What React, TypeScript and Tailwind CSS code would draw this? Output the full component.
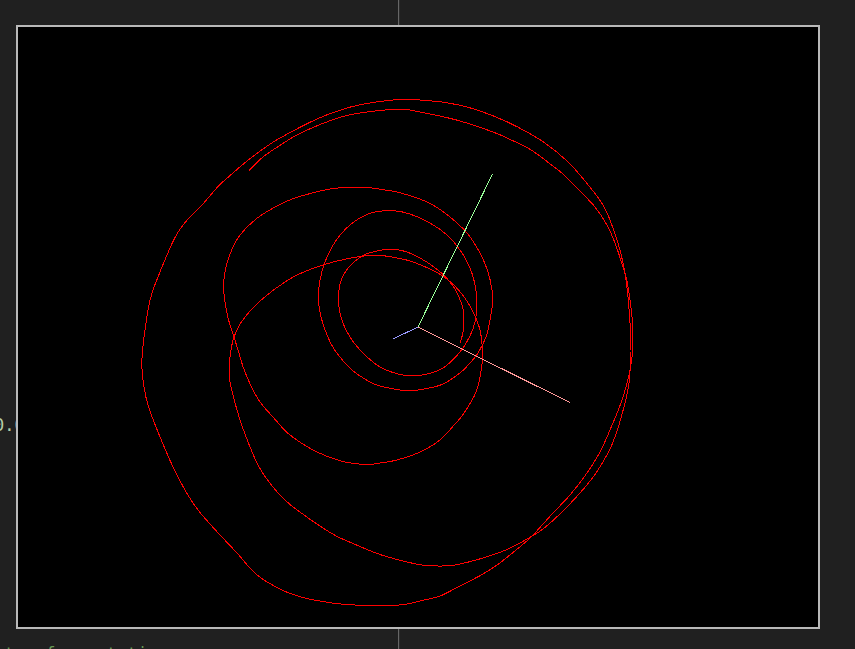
type Point = [number, number];

const TRAJECTORY: Point[] = [
  [249, 170.5], [263, 157], [279, 146], [297, 135], [320, 124.5], [343, 116.5], [360, 113], [385, 110],
  [397, 109.5], [406, 109.5], [415, 111], [435, 115], [460, 121], [493, 132], [508, 138.5], [527, 147.5],
  [537, 154], [547, 161.5], [563, 174], [577, 188], [595, 207], [607, 225], [615, 243], [623, 267],
  [627, 281], [630, 300], [632, 317], [632.7, 335], [632, 357], [630, 370], [627, 383], [621, 403],
  [610, 430], [600, 452], [587, 473], [570, 495], [553, 513], [530, 538], [508, 556.5], [497, 565],
  [483, 574], [467, 582.5], [456, 588], [440, 596], [420, 601], [407, 604], [390, 605.5], [355, 605],
  [332, 603], [303, 597.5], [282, 590], [257, 575], [237, 553], [215, 529.5], [198, 510], [185, 490],
  [173, 467], [158, 432], [148, 405], [144, 387], [142, 369], [142, 358], [143, 346], [145, 330],
  [148, 310], [152, 293], [158, 277], [167, 255], [175, 237.5], [183, 225], [193, 214], [202, 205],
  [212, 193.5], [220, 184.5], [233, 173], [247, 161], [263, 149], [280, 138], [317, 119], [347, 108],
  [370, 103], [390, 100.3], [400, 99.5], [413, 99.5], [432, 101], [442, 102], [463, 106], [480, 111],
  [503, 120], [527, 132], [547, 144.5], [567, 161], [580, 175], [593, 191], [603, 205], [610, 220],
  [618, 243], [623, 263], [626, 280], [628, 297], [630, 323], [631, 350], [630.5, 363], [629, 383],
  [625, 403], [618, 428], [610, 449], [598, 470], [590, 481], [580, 493], [563, 511], [543, 529],
  [527, 539], [507, 549.5], [483, 558], [455, 565], [438, 566], [422, 565], [407, 562], [380, 554.5],
  [353, 543.5], [330, 532.5], [290, 504.5], [273, 487], [258, 465], [245, 434], [237, 410], [231, 387],
  [229.5, 377], [229.5, 363], [231, 350], [234, 337], [242, 321], [260, 301], [288, 280], [310, 269.5],
  [337, 261], [367, 255.5], [380, 255.5], [392, 257], [410, 261], [430, 269], [447, 279], [462, 294],
  [473, 312], [480, 330], [482.5, 350], [482.5, 360], [479.5, 380], [476.5, 391], [471, 402],
  [462, 416], [455, 424], [440, 440], [420, 452], [397, 460], [380, 463], [366, 464.5], [343, 461.5],
  [317, 452], [290, 435], [273, 417], [258, 399], [245, 372], [238, 350], [234, 337], [228, 318],
  [225, 302], [223.7, 287], [225, 272], [230, 254], [240, 235], [258, 217.5], [283, 203], [303, 195.5],
  [330, 189], [347, 187.5], [367, 187.5], [385, 190], [397, 192], [417, 198], [433, 205], [450, 217],
  [467, 233], [480, 253], [488, 272], [492, 290], [492.5, 303], [490, 320], [486, 337], [478, 353],
  [470, 363], [460, 373], [443, 384], [427, 388.5], [413, 390.5], [400, 390], [380, 386], [370, 382],
  [352, 370], [336, 352], [327, 335], [320.5, 315], [318.5, 297], [320, 280], [325, 262], [335, 242],
  [350, 225], [368, 214], [382, 211], [393, 210.5], [410, 214], [430, 223], [447, 235], [460, 250],
  [470, 268], [475.5, 287], [477, 303], [475.5, 320], [470, 336], [460, 352], [443, 368], [425, 374.5],
  [412, 375.5], [400, 374.5], [380, 367], [360, 350], [347, 332], [340, 313], [338.5, 298],
  [340.5, 282], [348, 268], [362, 256], [377, 251], [388, 249.5], [402, 250.5], [420, 258], [438, 270],
  [453, 286], [462, 305], [463.5, 317], [463, 332], [460, 343],
];

// Catmull-Rom interpolation expressed as cubic Bézier segments.
function smoothPath(points: Point[]): string {
  let d = `M${points[0][0]} ${points[0][1]}`;
  for (let i = 0; i < points.length - 1; i++) {
    const before = points[Math.max(i - 1, 0)];
    const from = points[i];
    const to = points[i + 1];
    const after = points[Math.min(i + 2, points.length - 1)];
    const c1x = from[0] + (to[0] - before[0]) / 6;
    const c1y = from[1] + (to[1] - before[1]) / 6;
    const c2x = to[0] - (after[0] - from[0]) / 6;
    const c2y = to[1] - (after[1] - from[1]) / 6;
    d += `C${c1x} ${c1y} ${c2x} ${c2y} ${to[0]} ${to[1]}`;
  }
  return d;
}

function Editor() {
  return (
    <main className="flex h-full font-['DejaVu_Sans_Mono','Liberation_Mono',monospace] text-[17px] leading-6">
      <div className="w-[399px] shrink-0 overflow-hidden border-r border-[#666666] pt-[413px]">
        <pre className="-ml-1.5 font-[inherit] text-[#b5cea8]">0.0</pre>
        <pre className="-ml-1.5 mt-[205px] font-[inherit] text-[#6a9955]">ctor for rotation</pre>
      </div>
      <div className="grow border-l border-[#2b2b2b]" />
    </main>
  );
}

function Viewport() {
  return (
    <section
      aria-label="Trajectory"
      className="absolute top-[25px] right-[35px] bottom-5 left-4 border-2 border-[#b9b9b9] bg-black"
    >
      <svg
        viewBox="18 27 800 600"
        className="block h-full w-full"
        fill="none"
        strokeWidth="1"
        shapeRendering="crispEdges"
      >
        <path d={smoothPath(TRAJECTORY)} stroke="#ff0000" />
        <path d="M418.5 327.3L570 402.6" stroke="#ff9999" />
        <path d="M418 327L492.5 174" stroke="#99ff99" />
        <path d="M418 327L393 339" stroke="#9999ff" />
      </svg>
    </section>
  );
}

export default function App() {
  return (
    <div className="relative h-screen overflow-hidden bg-[#202020]">
      <Editor />
      <Viewport />
    </div>
  );
}
